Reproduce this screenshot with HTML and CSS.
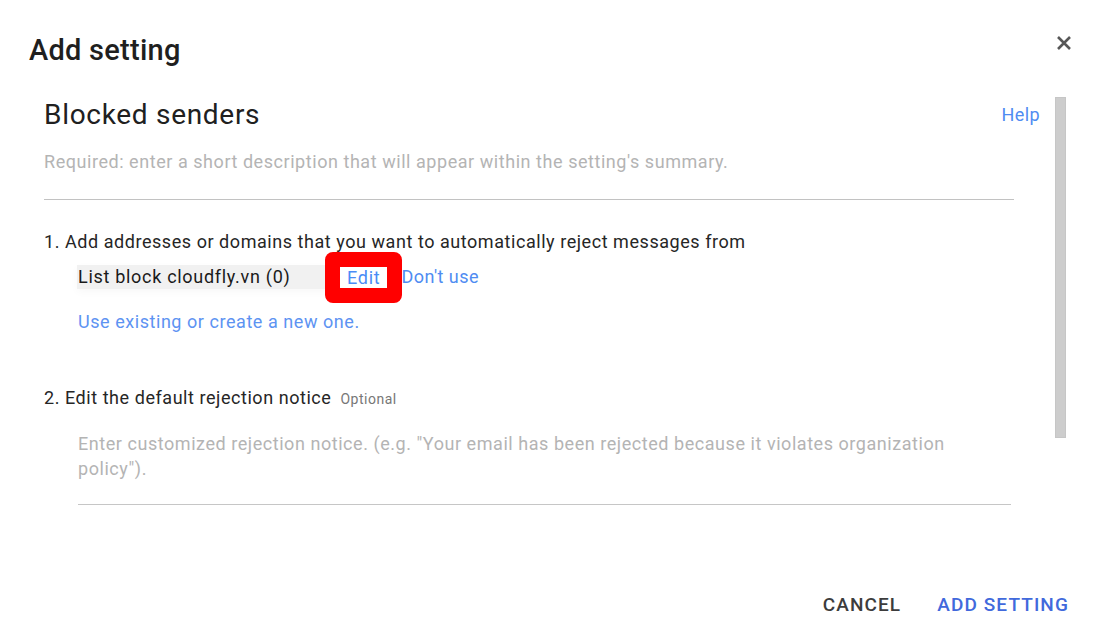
FILE: index.html
```html
<!DOCTYPE html>
<html lang="en">
<head>
<meta charset="utf-8">
<title>Add setting</title>
<link rel="stylesheet" href="styles.css">
</head>
<body>
<div class="dialog">
  <div class="dialog-header">
    <h1 class="dialog-title">Add setting</h1>
    <button class="close-btn" aria-label="Close">
      <svg width="16" height="16" viewBox="0 0 16 16"><path d="M2 2 L14 14 M14 2 L2 14" stroke="#575757" stroke-width="2.6" stroke-linecap="butt"/></svg>
    </button>
  </div>
  <div class="dialog-main">
    <div class="content">
      <div class="title-row">
        <h2 class="setting-name">Blocked senders</h2>
        <a class="link help">Help</a>
      </div>
      <div class="desc-field">Required: enter a short description that will appear within the setting's summary.</div>

      <div class="section-label">1. Add addresses or domains that you want to automatically reject messages from</div>
      <div class="list-row">
        <span class="chip">List block cloudfly.vn (0)</span>
        <a class="link edit">Edit</a>
        <a class="link dont-use">Don't use</a>
      </div>
      <a class="link use-existing">Use existing or create a new one.</a>

      <div class="section-label section-2">2. Edit the default rejection notice <span class="optional">Optional</span></div>
      <div class="notice-field">Enter customized rejection notice. (e.g. "Your email has been rejected because it violates organization policy").</div>
    </div>
    <div class="scrollbar"></div>
  </div>
  <div class="dialog-footer">
    <button class="btn cancel">CANCEL</button>
    <button class="btn primary">ADD SETTING</button>
  </div>
</div>
</body>
</html>
```

FILE: styles.css
```css
* { box-sizing: border-box; }
html, body {
  margin: 0;
  padding: 0;
  background: #ffffff;
}
body {
  font-family: Roboto, "Noto Sans", Arial, sans-serif;
  color: #212121;
}
.dialog {
  width: 1097px;
  height: 640px;
  display: flex;
  flex-direction: column;
  overflow: hidden;
}
.dialog-header {
  display: flex;
  justify-content: space-between;
  align-items: flex-start;
  padding: 33px 24px 0 29px;
  height: 97px;
}
.dialog-title {
  margin: 0;
  font-size: 29px;
  line-height: 34px;
  font-weight: 500;
  letter-spacing: 0.25px;
  color: #1f1f1f;
}
.close-btn {
  border: 0;
  background: none;
  padding: 0;
  margin-top: 1px;
  width: 18px;
  height: 18px;
  display: flex;
  align-items: center;
  justify-content: center;
}
.dialog-main {
  display: flex;
  align-items: flex-start;
  padding-left: 44px;
  height: 496px;
}
.content {
  flex: 1;
  font-size: 18px;
  line-height: 24px;
  letter-spacing: 0.55px;
  padding-top: 1px;
}
.scrollbar {
  width: 11px;
  height: 341px;
  margin-left: 15px;
  margin-right: 31px;
  background: #cdcdcd;
  border: 1px solid #c6c6c6;
}
.title-row {
  display: flex;
  justify-content: space-between;
  align-items: flex-start;
  height: 34px;
}
.setting-name {
  margin: 0;
  font-size: 28px;
  line-height: 34px;
  font-weight: 400;
  letter-spacing: 0.7px;
  color: #202020;
}
.link {
  color: #4f8cf2;
  cursor: pointer;
}
.help {
  font-size: 18px;
  line-height: 34px;
  letter-spacing: 0.4px;
}
.desc-field {
  margin-top: 18px;
  margin-right: 26px;
  padding-bottom: 25px;
  border-bottom: 1px solid #c2c2c2;
  color: #b4b4b4;
}
.section-label {
  margin-top: 30px;
  color: #262626;
}
.list-row {
  display: flex;
  align-items: center;
  height: 24px;
  margin-top: 11px;
  margin-left: 33px;
}
.chip {
  display: block;
  width: 263px;
  padding-left: 1px;
  background: #f1f1f1;
  color: #1a1a1a;
  line-height: 24px;
  letter-spacing: 0.7px;
  box-shadow: 0 3px 8px rgba(0, 0, 0, 0.03);
}
.edit {
  position: relative;
  display: block;
  line-height: 21px;
  padding: 0 7px 0 7px;
  background: #ffffff;
  color: #4a8cf6;
  letter-spacing: 0.75px;
}
.edit::before {
  content: "";
  position: absolute;
  left: -15px;
  right: -15px;
  top: -15px;
  bottom: -15px;
  border: 15px solid #ff0000;
  border-radius: 8px;
}
.dont-use {
  display: block;
  margin-left: 14px;
  line-height: 24px;
  letter-spacing: 0.45px;
}
.use-existing {
  display: block;
  margin-top: 21px;
  margin-left: 34px;
  color: #5d93f2;
}
.section-2 {
  margin-top: 52px;
}
.optional {
  font-size: 14px;
  color: #777777;
  margin-left: 4px;
  letter-spacing: 0.5px;
}
.notice-field {
  margin-top: 20px;
  margin-left: 34px;
  margin-right: 29px;
  line-height: 25px;
  padding-bottom: 23px;
  border-bottom: 1px solid #c6c6c6;
  color: #b4b4b4;
}
.dialog-footer {
  display: flex;
  justify-content: flex-end;
  align-items: flex-start;
  gap: 36px;
  padding-right: 28px;
}
.btn {
  border: 0;
  background: none;
  padding: 0;
  font-family: Roboto, "Noto Sans", Arial, sans-serif;
  font-size: 19px;
  line-height: 24px;
  font-weight: 500;
  letter-spacing: 1.1px;
}
.cancel { color: #3c3c3c; }
.primary { color: #4169dc; }
```
